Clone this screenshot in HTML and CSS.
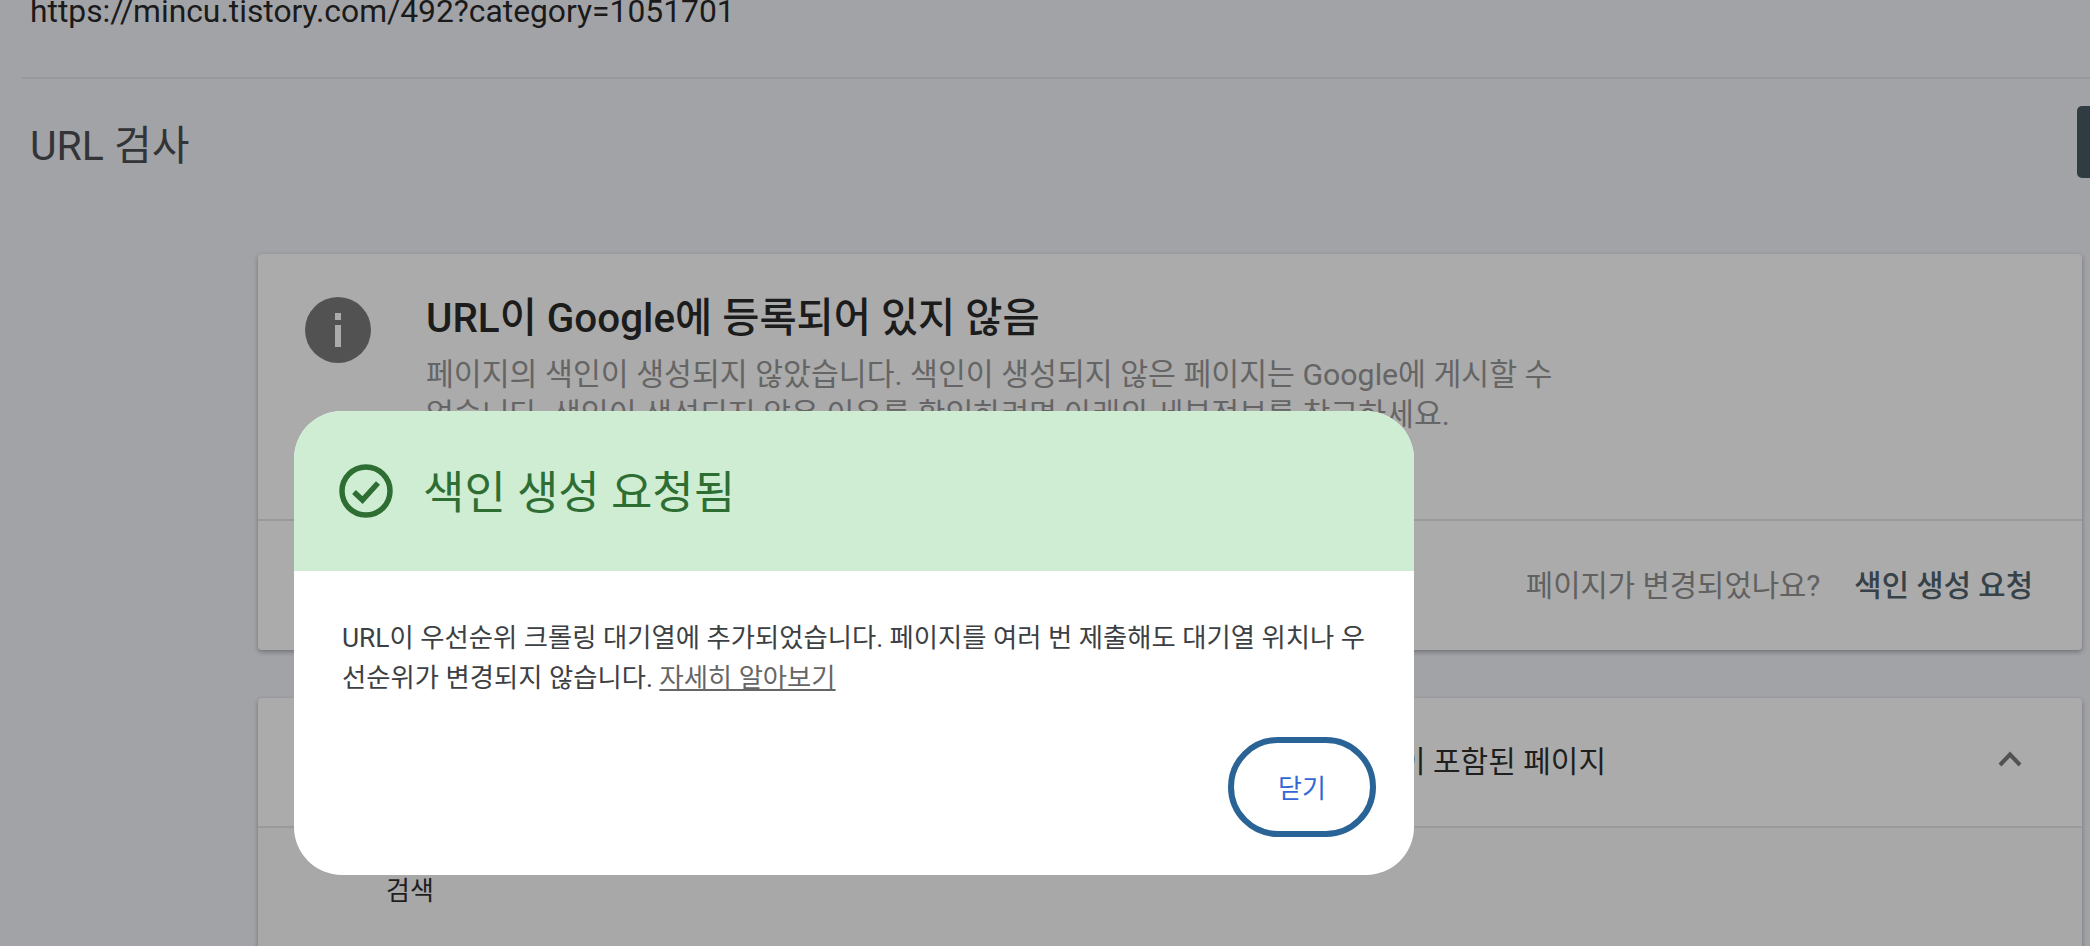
FILE: index.html
```html
<!DOCTYPE html>
<html lang="ko">
<head>
  <meta charset="UTF-8">
  <title>URL 검사</title>
  <link rel="stylesheet" href="styles.css">
</head>
<body>
<div class="page">
  <div class="url-bar">https://mincu.tistory.com/492?category=1051701</div>

  <div class="title-row">
    <h1>URL 검사</h1>
    <div class="side-btn"></div>
  </div>

  <div class="content">
    <div class="card">
      <div class="status">
        <svg class="status-icon" viewBox="0 0 66 66">
          <circle cx="33" cy="33" r="33" fill="#525252"/>
          <rect x="30" y="16" width="6" height="7" fill="#ababab"/>
          <rect x="30" y="28" width="6" height="22" fill="#ababab"/>
        </svg>
        <div class="status-text">
          <h2>URL이 Google에 등록되어 있지 않음</h2>
          <p>페이지의 색인이 생성되지 않았습니다. 색인이 생성되지 않은 페이지는 Google에 게시할 수 없습니다. 색인이 생성되지 않은 이유를 확인하려면 아래의 세부정보를 참고하세요.</p>
        </div>
      </div>
      <div class="card-foot">
        <span class="foot-note">페이지가 변경되었나요?</span>
        <a class="foot-link">색인 생성 요청</a>
      </div>
    </div>

    <div class="card">
      <div class="card-head">
        <span class="head-title">Google 색인이 포함된 페이지</span>
        <svg class="chevron" viewBox="0 0 24 16">
          <path d="M2 14 L12 3.500 L22 14" fill="none" stroke="#525252" stroke-width="4"/>
        </svg>
      </div>
      <div class="card-body">검색</div>
    </div>
  </div>

  <div class="modal">
    <div class="modal-head">
      <svg class="check-icon" viewBox="0 0 54 54">
        <circle cx="27" cy="27" r="24" fill="none" stroke="#2e6e33" stroke-width="5.500"/>
        <path d="M15 28 L23.500 36 L39 19" fill="none" stroke="#2e6e33" stroke-width="5.500"/>
      </svg>
      <span class="modal-title">색인 생성 요청됨</span>
    </div>
    <div class="modal-body">
      <p>URL이 우선순위 크롤링 대기열에 추가되었습니다. 페이지를 여러 번 제출해도 대기열 위치나 우선순위가 변경되지 않습니다. <a href="#">자세히 알아보기</a></p>
      <div class="modal-actions">
        <button class="close-btn">닫기</button>
      </div>
    </div>
  </div>
</div>
</body>
</html>
```

FILE: styles.css
```css
* {
  margin: 0;
  padding: 0;
  box-sizing: border-box;
}

body {
  background-color: #a2a3a7;
  font-family: Roboto, "Noto Sans CJK KR", sans-serif;
  overflow: hidden;
}

.page {
  position: relative;
  width: 2090px;
  height: 946px;
  overflow: hidden;
}

/* the page is scrolled a little, so the url line is cut at the top */
.url-bar {
  height: 88px;
  margin-top: -9px;
  margin-left: 22px;
  padding-left: 8px;
  border-bottom: 2px solid #98999b;
  font-size: 31.800px;
  line-height: 40px;
  color: #1a1a1a;
}

.title-row {
  display: flex;
  justify-content: space-between;
  height: 175px;
  padding: 27px 0 0 30px;
}

.title-row h1 {
  margin-top: 13px;
  font-size: 41px;
  font-weight: 400;
  line-height: 54px;
  color: #333438;
}

.side-btn {
  flex-shrink: 0;
  width: 120px;
  height: 72px;
  margin-right: -107px;
  background-color: #2f3c42;
  border-radius: 5px;
}

.content {
  margin: 0 8px 0 258px;
}

.card {
  margin-bottom: 48px;
  background-color: #ababab;
  border-radius: 4px;
  box-shadow: 0 2px 5px rgba(0, 0, 0, .3);
}

.status {
  display: flex;
  height: 267px;
  padding: 43px 0 0 47px;
  border-bottom: 2px solid #999a9a;
}

.status-icon {
  flex-shrink: 0;
  width: 66px;
  height: 66px;
  margin-right: 55px;
}

.status-text {
  width: 1145px;
}

.status-text h2 {
  margin-top: -3px;
  font-size: 40.400px;
  font-weight: 500;
  line-height: 50px;
  color: #1c1c1c;
}

.status-text p {
  margin-top: 11px;
  font-size: 30.300px;
  line-height: 40px;
  color: #656565;
}

.card-foot {
  display: flex;
  justify-content: flex-end;
  align-items: center;
  gap: 34px;
  height: 129px;
  padding-right: 49px;
  padding-bottom: 4px;
  font-size: 29.700px;
}

.foot-note {
  color: #616161;
}

.foot-link {
  font-weight: 500;
  color: #364148;
}

.card-head {
  display: flex;
  justify-content: flex-end;
  align-items: center;
  height: 130px;
  padding: 0 60px 6px 0;
  border-bottom: 2px solid #999a9a;
}

.head-title {
  margin-right: 392px;
  font-size: 30px;
  color: #1f1f1f;
  white-space: nowrap;
}

.chevron {
  width: 24px;
  height: 16px;
}

.card-body {
  height: 300px;
  padding: 44px 0 0 128px;
  background-color: #a8a8a8;
  font-size: 26px;
  line-height: 38px;
  color: #1f1f1f;
}

.modal {
  position: absolute;
  left: 294px;
  top: 411px;
  width: 1120px;
  height: 464px;
  background-color: #fff;
  border-radius: 48px;
  overflow: hidden;
}

.modal-head {
  display: flex;
  align-items: center;
  gap: 30px;
  height: 160px;
  padding: 0 0 0 45px;
  background-color: #ceedd3;
  font-size: 45px;
  color: #2e6e33;
}

.modal-title {
  margin-top: -4px;
}

.check-icon {
  width: 54px;
  height: 54px;
}

.modal-body {
  padding: 47px 38px 0 48px;
}

.modal-body p {
  font-size: 26.350px;
  line-height: 40px;
  color: #3c4043;
}

.modal-body a {
  color: #666;
  text-decoration: underline;
}

.modal-actions {
  display: flex;
  justify-content: flex-end;
  margin-top: 39px;
}

.close-btn {
  width: 148px;
  height: 100px;
  padding-bottom: 2px;
  background-color: #fff;
  border: 6px solid #2a6496;
  border-radius: 50px;
  font-family: inherit;
  font-size: 26px;
  color: #3367d6;
}
```
